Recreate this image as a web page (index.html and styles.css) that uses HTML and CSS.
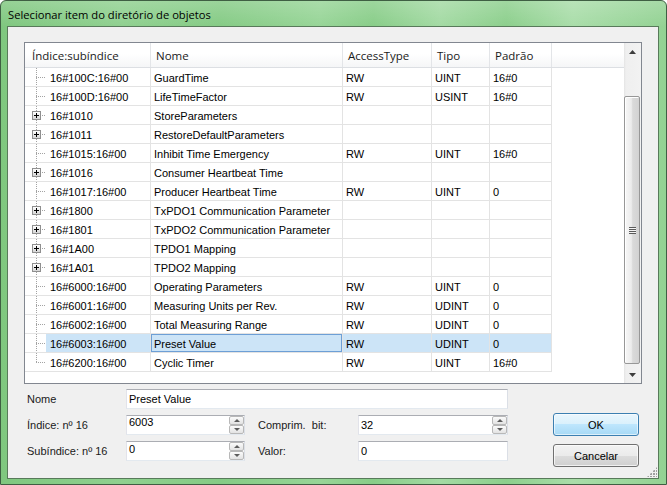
FILE: index.html
```html
<!DOCTYPE html>
<html lang="pt">
<head>
<meta charset="utf-8">
<title>Selecionar item do diretório de objetos</title>
<link rel="stylesheet" href="styles.css">
</head>
<body>
<div class="window">
  <div class="titlebar">Selecionar item do diretório de objetos</div>
  <div class="client">
    <div class="listbox">
      <div class="grid">
        <div class="header">
          <div class="hc w1 first">Índice:subíndice</div>
          <div class="hc w2">Nome</div>
          <div class="hc w3">AccessType</div>
          <div class="hc w4">Tipo</div>
          <div class="hc w5">Padrão</div>
          <div class="hc rest"></div>
        </div>
        <div class="row"><div class="c w1 c1"><span class="gutter leaf"></span><span class="idx">16#100C:16#00</span></div><div class="c w2">GuardTime</div><div class="c w3">RW</div><div class="c w4">UINT</div><div class="c w5">16#0</div></div>
        <div class="row"><div class="c w1 c1"><span class="gutter leaf"></span><span class="idx">16#100D:16#00</span></div><div class="c w2">LifeTimeFactor</div><div class="c w3">RW</div><div class="c w4">USINT</div><div class="c w5">16#0</div></div>
        <div class="row"><div class="c w1 c1"><span class="gutter"><span class="pbox"></span></span><span class="idx">16#1010</span></div><div class="c w2">StoreParameters</div><div class="c w3"></div><div class="c w4"></div><div class="c w5"></div></div>
        <div class="row"><div class="c w1 c1"><span class="gutter"><span class="pbox"></span></span><span class="idx">16#1011</span></div><div class="c w2">RestoreDefaultParameters</div><div class="c w3"></div><div class="c w4"></div><div class="c w5"></div></div>
        <div class="row"><div class="c w1 c1"><span class="gutter leaf"></span><span class="idx">16#1015:16#00</span></div><div class="c w2">Inhibit Time Emergency</div><div class="c w3">RW</div><div class="c w4">UINT</div><div class="c w5">16#0</div></div>
        <div class="row"><div class="c w1 c1"><span class="gutter"><span class="pbox"></span></span><span class="idx">16#1016</span></div><div class="c w2">Consumer Heartbeat Time</div><div class="c w3"></div><div class="c w4"></div><div class="c w5"></div></div>
        <div class="row"><div class="c w1 c1"><span class="gutter leaf"></span><span class="idx">16#1017:16#00</span></div><div class="c w2">Producer Heartbeat Time</div><div class="c w3">RW</div><div class="c w4">UINT</div><div class="c w5">0</div></div>
        <div class="row"><div class="c w1 c1"><span class="gutter"><span class="pbox"></span></span><span class="idx">16#1800</span></div><div class="c w2">TxPDO1 Communication Parameter</div><div class="c w3"></div><div class="c w4"></div><div class="c w5"></div></div>
        <div class="row"><div class="c w1 c1"><span class="gutter"><span class="pbox"></span></span><span class="idx">16#1801</span></div><div class="c w2">TxPDO2 Communication Parameter</div><div class="c w3"></div><div class="c w4"></div><div class="c w5"></div></div>
        <div class="row"><div class="c w1 c1"><span class="gutter"><span class="pbox"></span></span><span class="idx">16#1A00</span></div><div class="c w2">TPDO1 Mapping</div><div class="c w3"></div><div class="c w4"></div><div class="c w5"></div></div>
        <div class="row"><div class="c w1 c1"><span class="gutter"><span class="pbox"></span></span><span class="idx">16#1A01</span></div><div class="c w2">TPDO2 Mapping</div><div class="c w3"></div><div class="c w4"></div><div class="c w5"></div></div>
        <div class="row"><div class="c w1 c1"><span class="gutter leaf"></span><span class="idx">16#6000:16#00</span></div><div class="c w2">Operating Parameters</div><div class="c w3">RW</div><div class="c w4">UINT</div><div class="c w5">0</div></div>
        <div class="row"><div class="c w1 c1"><span class="gutter leaf"></span><span class="idx">16#6001:16#00</span></div><div class="c w2">Measuring Units per Rev.</div><div class="c w3">RW</div><div class="c w4">UDINT</div><div class="c w5">0</div></div>
        <div class="row"><div class="c w1 c1"><span class="gutter leaf"></span><span class="idx">16#6002:16#00</span></div><div class="c w2">Total Measuring Range</div><div class="c w3">RW</div><div class="c w4">UDINT</div><div class="c w5">0</div></div>
        <div class="row sel"><div class="c w1 c1"><span class="gutter leaf"></span><span class="idx">16#6003:16#00</span></div><div class="c w2 focus">Preset Value</div><div class="c w3">RW</div><div class="c w4">UDINT</div><div class="c w5">0</div></div>
        <div class="row"><div class="c w1 c1"><span class="gutter leaf last"></span><span class="idx">16#6200:16#00</span></div><div class="c w2">Cyclic Timer</div><div class="c w3">RW</div><div class="c w4">UINT</div><div class="c w5">16#0</div></div>
      </div>
      <div class="vscroll">
        <div class="sbtn"><svg width="7" height="4" viewBox="0 0 7 4"><polygon points="3.5,0 7,4 0,4" fill="#3d3d3d"/></svg></div>
        <div class="track"><div class="thumb"><span class="grip-lines"></span></div></div>
        <div class="sbtn"><svg width="7" height="4" viewBox="0 0 7 4"><polygon points="0,0 7,0 3.5,4" fill="#3d3d3d"/></svg></div>
      </div>
    </div>
    <div class="bottom">
      <div class="form">
        <div class="lbl">Nome</div>
        <div class="tb span"><span class="val">Preset Value</span></div>
        <div class="lbl">Índice: nº 16</div>
        <div class="tb"><span class="val hi3">6003</span><span class="spin"><span class="sb"><span class="aup"></span></span><span class="sb"><span class="adn"></span></span></span></div>
        <div class="lbl lbl2">Comprim.&nbsp; bit:</div>
        <div class="tb"><span class="val">32</span><span class="spin"><span class="sb"><span class="aup"></span></span><span class="sb"><span class="adn"></span></span></span></div>
        <div class="lbl">Subíndice: nº 16</div>
        <div class="tb"><span class="val hi1">0</span><span class="spin"><span class="sb"><span class="aup"></span></span><span class="sb"><span class="adn"></span></span></span></div>
        <div class="lbl lbl2">Valor:</div>
        <div class="tb"><span class="val">0</span></div>
      </div>
      <div class="buttons">
        <div class="btn ok">OK</div>
        <div class="btn cancel">Cancelar</div>
      </div>
    </div>
    <div class="sizegrip"></div>
  </div>
</div>
</body>
</html>
```
FILE: styles.css
```css
* { box-sizing: border-box; }
html, body { margin: 0; padding: 0; }
body {
  width: 667px;
  height: 485px;
  overflow: hidden;
  background: #ffffff;
  font-family: "Liberation Sans", Arial, sans-serif;
  font-size: 11px;
  color: #000;
}
.window {
  width: 667px;
  height: 485px;
  border: 1px solid #3f5f43;
  border-radius: 6px 6px 0 0;
  background:
    linear-gradient(to bottom, rgba(255,255,255,0.18), rgba(255,255,255,0) 26px),
    linear-gradient(to right, #7fc77f 0%, #8fd08f 18%, #85cb85 33%, #97d597 48%, #88cd88 56%, #a3daa3 66%, #8ccf8c 76%, #a9dda9 86%, #93d293 100%);
  padding: 0 7px 5px 6px;
  display: flex;
  flex-direction: column;
}
.titlebar {
  height: 25px;
  padding-left: 1px;
  padding-top: 1px;
  display: flex;
  align-items: center;
  font-family: "Open Sans", "Noto Sans", sans-serif;
  font-size: 11.2px;
  color: #000;
}
.client {
  position: relative;
  height: 453px;
  border: 1px solid #587a5a;
  background: #f0f0f0;
  padding: 15px 0 0 16px;
  display: flex;
  flex-direction: column;
}
.listbox {
  width: 618px;
  height: 342px;
  flex: none;
  border: 1px solid #828790;
  background: #fff;
  display: flex;
}
.grid { width: 599px; flex: none; }
.header {
  display: flex;
  height: 25px;
  border-bottom: 1px solid #dcdfe3;
  background: linear-gradient(to bottom, #ffffff 0%, #ffffff 45%, #f5f6f7 100%);
  font-family: "Open Sans", "Noto Sans", sans-serif;
  font-size: 11.5px;
  color: #1a1a1a;
}
.hc {
  border-right: 1px solid #e3e5e8;
  padding-left: 5px;
  display: flex;
  align-items: center;
  white-space: nowrap;
}
.hc.first { padding-left: 7px; }
.hc.rest { flex: 1; border-right: none; }
.w1 { width: 126px; flex: none; }
.w2 { width: 192px; flex: none; }
.w3 { width: 89px; flex: none; }
.w4 { width: 58px; flex: none; }
.w5 { width: 62px; flex: none; }
.row {
  display: flex;
  width: 527px;
  height: 19px;
  border-bottom: 1px solid #e3e3e3;
}
.c {
  border-right: 1px solid #e3e3e3;
  padding-left: 3px;
  padding-top: 1px;
  display: flex;
  align-items: center;
  white-space: nowrap;
  overflow: hidden;
}
.c1 { padding-left: 0; padding-top: 0; }
.gutter {
  width: 21px;
  height: 100%;
  flex: none;
  display: flex;
  align-items: center;
  background-image:
    repeating-linear-gradient(to bottom, #a3a3a3 0 1px, transparent 1px 2px),
    repeating-linear-gradient(to right, #a3a3a3 0 1px, transparent 1px 2px);
  background-size: 1px 100%, 10px 1px;
  background-position: 11px 0, 11px 9px;
  background-repeat: no-repeat;
}
.gutter.last { background-size: 1px 10px, 10px 1px; }
.pbox {
  position: relative;
  margin-left: 7px;
  width: 9px;
  height: 9px;
  border: 1px solid #8f8f8f;
  background: linear-gradient(to bottom, #ffffff, #d6d6d6);
}
.pbox::before {
  content: "";
  position: absolute;
  left: 1px; top: 3px;
  width: 5px; height: 1px;
  background: #000;
}
.pbox::after {
  content: "";
  position: absolute;
  left: 3px; top: 1px;
  width: 1px; height: 5px;
  background: #000;
}
.idx {
  flex: 1;
  height: 100%;
  padding-left: 4px;
  padding-top: 1px;
  display: flex;
  align-items: center;
}
.sel .idx, .sel .c.w2, .sel .c.w3, .sel .c.w4, .sel .c.w5 { background: #cce4f7; }
.sel .focus { box-shadow: inset 0 0 0 1px #6d9fd6; }

.vscroll {
  width: 17px;
  flex: none;
  display: flex;
  flex-direction: column;
  background: linear-gradient(to right, #e4e4e4 0, #efefef 2px, #f2f2f2 100%);
}
.sbtn {
  height: 17px;
  flex: none;
  display: flex;
  align-items: center;
  justify-content: center;
}
.track { flex: 1; padding-top: 36px; }
.thumb {
  height: 268px;
  margin-right: 1px;
  border: 1px solid #979797;
  border-radius: 2px;
  background: linear-gradient(to right, #f7f7f7 0%, #ececec 45%, #dadada 55%, #d2d2d2 100%);
  box-shadow: inset 1px 1px 0 #ffffff;
  display: flex;
  align-items: center;
  justify-content: center;
}
.grip-lines {
  width: 7px;
  height: 7px;
  background: repeating-linear-gradient(to bottom, #5a5a5a 0 1px, #f4f4f4 1px 2px);
}

.bottom {
  display: flex;
  margin-top: 5px;
  margin-left: 3px;
}
.form {
  display: grid;
  grid-template-columns: 99px 119px 113px 150px;
  grid-auto-rows: 20px;
  row-gap: 6px;
}
.lbl { display: flex; align-items: center; white-space: nowrap; color: #1a1a1a; }
.lbl2 { padding-left: 13px; }
.tb {
  border: 1px solid;
  border-color: #abadb3 #dbdfe6 #e3e9ef #e2e3ea;
  background: #fff;
  padding-left: 2px;
  display: flex;
  align-items: center;
}
.tb.span { grid-column: 2 / 5; }
.val { white-space: nowrap; }
.val.hi3 { align-self: flex-start; padding-top: 0; }
.val.hi1 { align-self: flex-start; padding-top: 1px; }
.spin {
  margin-left: auto;
  width: 15px;
  height: 18px;
  display: flex;
  flex-direction: column;
}
.sb {
  flex: 1;
  border: 1px solid #b8b8b8;
  border-radius: 2px;
  background: linear-gradient(to bottom, #fbfbfb, #e3e3e3);
  display: flex;
  align-items: center;
  justify-content: center;
}
.aup, .adn {
  width: 0; height: 0;
  border-left: 3px solid transparent;
  border-right: 3px solid transparent;
}
.aup { border-bottom: 3px solid #5c5c5c; }
.adn { border-top: 3px solid #5c5c5c; }

.buttons {
  margin-left: 45px;
  margin-top: 24px;
  display: flex;
  flex-direction: column;
  gap: 8px;
}
.btn {
  width: 86px;
  height: 23px;
  border-radius: 3px;
  display: flex;
  align-items: center;
  justify-content: center;
  color: #000;
}
.ok {
  border: 1px solid #3c7fb1;
  background: linear-gradient(to bottom, #eaf6fd 0%, #d9f0fc 50%, #bee6fd 50%, #a7d9f5 100%);
  box-shadow: inset 0 0 0 1px rgba(255,255,255,0.6);
}
.cancel {
  border: 1px solid #707070;
  background: linear-gradient(to bottom, #f2f2f2 0%, #ebebeb 50%, #dddddd 50%, #cfcfcf 100%);
  box-shadow: inset 0 0 0 1px rgba(255,255,255,0.7);
}
.sizegrip {
  position: absolute;
  right: 1px;
  bottom: 1px;
  width: 10px;
  height: 10px;
  background:
    radial-gradient(circle at 1px 1px, #a0a0a0 1px, transparent 1.2px) 0 0 / 3px 3px;
  clip-path: polygon(100% 0, 100% 100%, 0 100%);
}
```
